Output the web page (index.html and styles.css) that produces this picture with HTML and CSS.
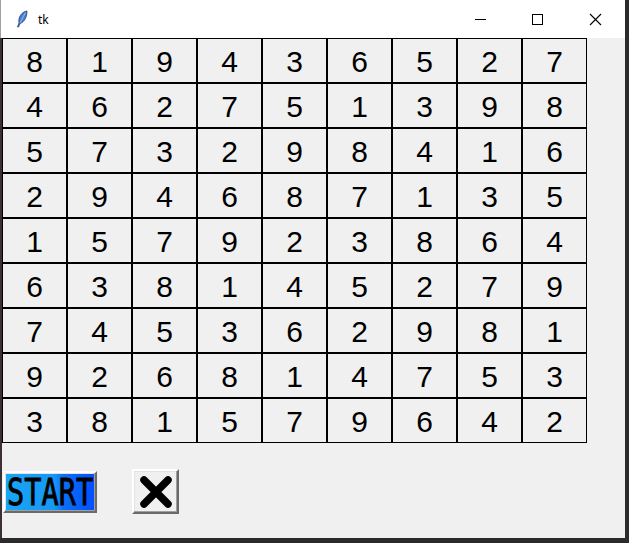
FILE: index.html
```html
<!DOCTYPE html>
<html>
<head>
<meta charset="utf-8">
<link rel="stylesheet" href="styles.css">
</head>
<body>
<div class="window">
  <div class="titlebar">
    <svg class="feather" width="12" height="18" viewBox="0 0 12 18">
      <path d="M11 1 C5 2 2 8 3 13 L1.5 17 L2.5 17 L4 13.5 C9 12 11 6 11 1 Z" fill="#4a7fd0" stroke="#1f3f80" stroke-width="0.8"/>
      <path d="M9.5 2.5 L4 13" stroke="#aac8f0" stroke-width="0.8" fill="none"/>
    </svg>
    <span class="title">tk</span>
    <div class="controls">
      <svg class="ctl" width="46" height="30" viewBox="0 0 46 30"><line x1="18" y1="15.5" x2="29" y2="15.5" stroke="#000" stroke-width="1"/></svg>
      <svg class="ctl" width="46" height="30" viewBox="0 0 46 30"><rect x="17.5" y="10.5" width="10" height="10" fill="none" stroke="#000" stroke-width="1"/></svg>
      <svg class="ctl" width="46" height="30" viewBox="0 0 46 30"><path d="M17 10 L28 21 M28 10 L17 21" stroke="#000" stroke-width="1.1"/></svg>
    </div>
  </div>
  <div class="client">
    <div class="board">
      <div class="cell">8</div><div class="cell">1</div><div class="cell">9</div><div class="cell">4</div><div class="cell">3</div><div class="cell">6</div><div class="cell">5</div><div class="cell">2</div><div class="cell">7</div>
      <div class="cell">4</div><div class="cell">6</div><div class="cell">2</div><div class="cell">7</div><div class="cell">5</div><div class="cell">1</div><div class="cell">3</div><div class="cell">9</div><div class="cell">8</div>
      <div class="cell">5</div><div class="cell">7</div><div class="cell">3</div><div class="cell">2</div><div class="cell">9</div><div class="cell">8</div><div class="cell">4</div><div class="cell">1</div><div class="cell">6</div>
      <div class="cell">2</div><div class="cell">9</div><div class="cell">4</div><div class="cell">6</div><div class="cell">8</div><div class="cell">7</div><div class="cell">1</div><div class="cell">3</div><div class="cell">5</div>
      <div class="cell">1</div><div class="cell">5</div><div class="cell">7</div><div class="cell">9</div><div class="cell">2</div><div class="cell">3</div><div class="cell">8</div><div class="cell">6</div><div class="cell">4</div>
      <div class="cell">6</div><div class="cell">3</div><div class="cell">8</div><div class="cell">1</div><div class="cell">4</div><div class="cell">5</div><div class="cell">2</div><div class="cell">7</div><div class="cell">9</div>
      <div class="cell">7</div><div class="cell">4</div><div class="cell">5</div><div class="cell">3</div><div class="cell">6</div><div class="cell">2</div><div class="cell">9</div><div class="cell">8</div><div class="cell">1</div>
      <div class="cell">9</div><div class="cell">2</div><div class="cell">6</div><div class="cell">8</div><div class="cell">1</div><div class="cell">4</div><div class="cell">7</div><div class="cell">5</div><div class="cell">3</div>
      <div class="cell">3</div><div class="cell">8</div><div class="cell">1</div><div class="cell">5</div><div class="cell">7</div><div class="cell">9</div><div class="cell">6</div><div class="cell">4</div><div class="cell">2</div>
    </div>
    <div class="buttons">
      <div class="btn start"><div class="start-img"><span class="start-text">START</span></div></div>
      <div class="btn close">
        <svg width="36" height="36" viewBox="0 0 36 36">
          <path d="M6 6 L30 30 M30 6 L6 30" stroke="#000" stroke-width="7.5" stroke-linecap="round"/>
        </svg>
      </div>
    </div>
  </div>
</div>
</body>
</html>
```
FILE: styles.css
```css
html, body {
  margin: 0;
  padding: 0;
}
body {
  width: 629px;
  height: 543px;
  background: #2b2b2b;
  overflow: hidden;
  font-family: "Liberation Sans", Arial, sans-serif;
}
.window {
  width: 625px;
  height: 538px;
  display: flex;
  flex-direction: column;
  background: #f0f0f0;
}
.titlebar {
  height: 38px;
  flex: none;
  background: #ffffff;
  display: flex;
  align-items: center;
  box-sizing: border-box;
  border-left: 1px solid #a0a0a0;
}
.feather {
  margin-left: 15px;
}
.title {
  margin-left: 10px;
  font-size: 12px;
  font-family: "Noto Sans", "Liberation Sans", sans-serif;
  color: #000;
}
.controls {
  margin-left: auto;
  display: flex;
  align-items: center;
  margin-right: 6px;
}
.ctl {
  display: block;
  margin-left: 12px;
}
.client {
  flex: 1;
  border-left: 2px solid #3a3035;
  display: flex;
  flex-direction: column;
}
.board {
  display: grid;
  grid-template-columns: repeat(9, 65px);
  grid-template-rows: repeat(9, 45px);
  width: 585px;
}
.cell {
  box-sizing: border-box;
  border: 1px solid #000;
  background: #f0f0f0;
  display: flex;
  align-items: center;
  justify-content: center;
  font-size: 30px;
  line-height: 1;
  padding-top: 2px;
  color: #000;
}
.buttons {
  display: flex;
  align-items: center;
  margin-top: 26px;
  margin-left: 1px;
}
.btn {
  box-sizing: border-box;
  border-style: solid;
  border-width: 2px;
  border-color: #ffffff #6a6a6a #6a6a6a #ffffff;
  box-shadow: inset -1px -1px 0 #a0a0a0, inset 1px 1px 0 #e3e3e3;
  background: #f0f0f0;
  display: flex;
  align-items: center;
  justify-content: center;
}
.start {
  width: 94px;
  height: 42px;
  margin-top: 1px;
}
.start-img {
  width: 88px;
  height: 36px;
  background: linear-gradient(90deg, #19a6f5 0%, #1797f4 55%, #0c6ff8 65%, #0250ff 100%);
  display: flex;
  align-items: center;
  justify-content: center;
}
.start-text {
  display: inline-block;
  font-family: "DejaVu Sans Mono", "Liberation Mono", monospace;
  font-weight: normal;
  font-size: 26px;
  color: #000;
  transform: scale(1.1, 1.45);
  line-height: 1;
  -webkit-text-stroke: 0.6px #000;
}
.close {
  width: 47px;
  height: 45px;
  margin-left: 35px;
}
.close svg {
  display: block;
}
```
